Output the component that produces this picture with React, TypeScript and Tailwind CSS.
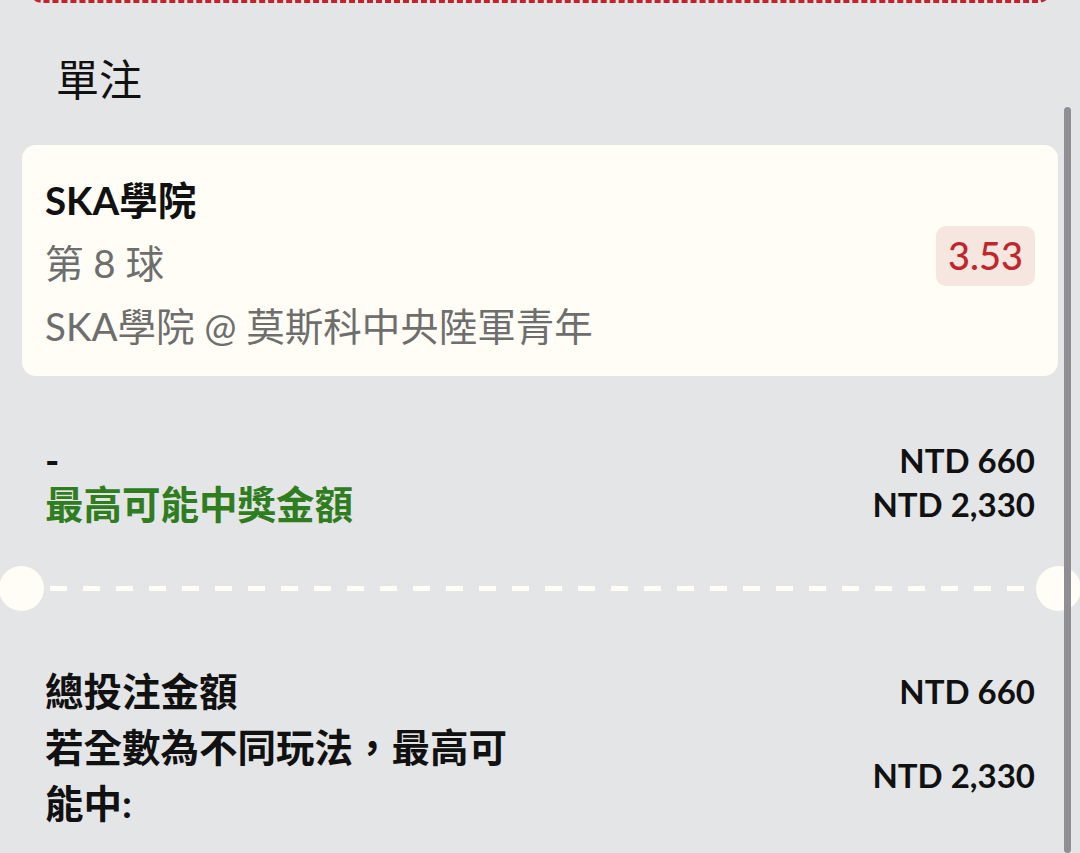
const font = "font-['Lato','Noto_Sans_CJK_TC',sans-serif]";

function Row({ label, value, labelClass = '' }: { label: string; value: string; labelClass?: string }) {
  return (
    <div className="flex items-center justify-between">
      <span className={`font-bold ${labelClass}`}>{label}</span>
      <span className="text-[33px] font-bold text-[#111]">{value}</span>
    </div>
  );
}

export default function App() {
  return (
    <div className={`relative h-[853px] overflow-hidden bg-[#e4e5e7] text-[#111] ${font}`}>
      {/* bottom of the previous (selected) slip */}
      <div className="mx-[28px] -mt-[40px] h-[43px] rounded-[14px] border-[3px] border-dashed border-[#c62128]" />

      <h1 className="mt-[44px] pl-[56px] text-[43px] leading-[60px] font-normal font-['Noto_Sans_CJK_TC',sans-serif]">
        單注
      </h1>

      <div className="mx-[22px] mt-[38px] flex items-center justify-between rounded-[14px] bg-[#fffdf5] pb-[18px] pl-[23px] pr-[23px] pt-[24px]">
        <div className="text-[38.5px] leading-[63px]">
          <div className="font-bold text-[#111]">SKA學院</div>
          <div className="text-[#6e6e6e]">第 8 球</div>
          <div className="text-[#6e6e6e]">SKA學院 @ 莫斯科中央陸軍青年</div>
        </div>
        <div className="-mt-[16px] flex h-[60px] items-center rounded-[10px] bg-[#f6e6e0] px-[12px] text-[38px] font-medium text-[#c0272d]">
          3.53
        </div>
      </div>

      <div className="mt-[62px] px-[45px] text-[38.5px] leading-[44px]">
        <Row label="-" value="NTD 660" />
        <Row label="最高可能中獎金額" value="NTD 2,330" labelClass="text-[#2f7d1f]" />
      </div>

      <div className="mt-[40px] flex items-center">
        <div className="-ml-px h-[45px] w-[45px] shrink-0 rounded-full bg-[#fffdf5]" />
        <svg className="mx-[6px] h-[5px] flex-1">
          <line x1="0" y1="2.5" x2="100%" y2="2.5" stroke="#fffdf5" strokeWidth="5" strokeDasharray="17 16" />
        </svg>
        <div className="-mr-px h-[45px] w-[45px] shrink-0 rounded-full bg-[#fffdf5]" />
      </div>

      <div className="mt-[52px] px-[45px] text-[38.5px] leading-[56px]">
        <Row label="總投注金額" value="NTD 660" />
        <div className="flex items-center justify-between">
          <span className="w-[480px] font-bold">若全數為不同玩法，最高可能中:</span>
          <span className="text-[33px] font-bold">NTD 2,330</span>
        </div>
      </div>

      <div className="absolute bottom-0 right-[9px] top-[107px] w-[7px] rounded-full bg-[#8f8f93]" />
    </div>
  );
}
